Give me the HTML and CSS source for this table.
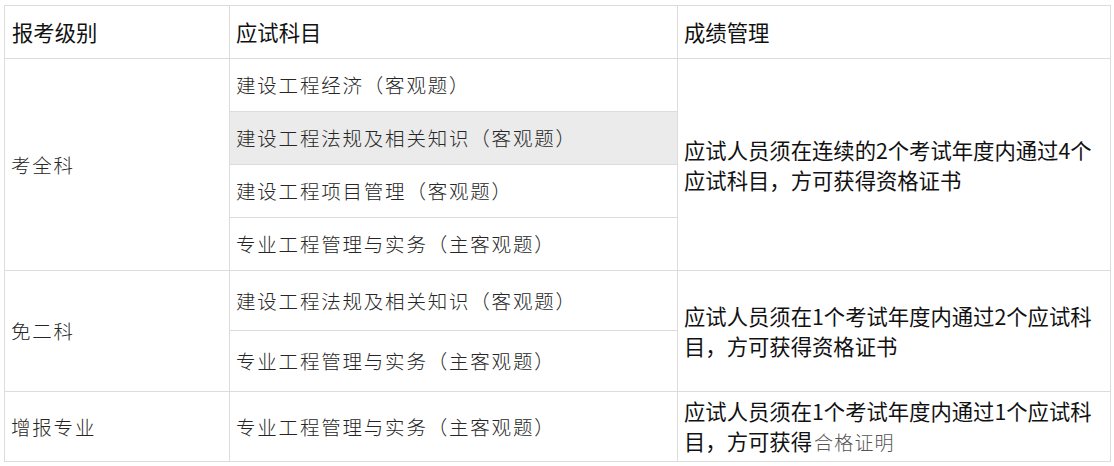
FILE: index.html
```html
<!DOCTYPE html>
<html lang="zh-CN">
<head>
<meta charset="utf-8">
<title>报考级别</title>
<link rel="stylesheet" href="styles.css">
</head>
<body>
<table class="exam">
  <colgroup>
    <col class="c1">
    <col class="c2">
    <col class="c3">
  </colgroup>
  <thead>
    <tr class="head">
      <th>报考级别</th>
      <th>应试科目</th>
      <th>成绩管理</th>
    </tr>
  </thead>
  <tbody>
    <tr class="r53">
      <td class="level" rowspan="4">考全科</td>
      <td class="subj">建设工程经济（客观题）</td>
      <td class="rule" rowspan="4">应试人员须在连续的2个考试年度内通过4个应试科目，方可获得资格证书</td>
    </tr>
    <tr class="r53">
      <td class="subj shade">建设工程法规及相关知识（客观题）</td>
    </tr>
    <tr class="r53">
      <td class="subj">建设工程项目管理（客观题）</td>
    </tr>
    <tr class="r53">
      <td class="subj">专业工程管理与实务（主客观题）</td>
    </tr>
    <tr class="r60">
      <td class="level" rowspan="2">免二科</td>
      <td class="subj">建设工程法规及相关知识（客观题）</td>
      <td class="rule" rowspan="2">应试人员须在1个考试年度内通过2个应试科目，方可获得资格证书</td>
    </tr>
    <tr class="r61">
      <td class="subj">专业工程管理与实务（主客观题）</td>
    </tr>
    <tr class="r70">
      <td class="level">增报专业</td>
      <td class="subj">专业工程管理与实务（主客观题）</td>
      <td class="rule">应试人员须在1个考试年度内通过1个应试科目，方可获得<span class="soft">合格证明</span></td>
    </tr>
  </tbody>
</table>
</body>
</html>
```

FILE: styles.css
```css
html, body {
  margin: 0;
  padding: 0;
  background: #ffffff;
}

body {
  padding: 5px 4px 0 4px;
}

.exam {
  width: 1106px;
  table-layout: fixed;
  border-collapse: collapse;
  font-family: "Noto Sans CJK SC", "Noto Sans", sans-serif;
}

.c1 { width: 225px; }
.c2 { width: 448px; }
.c3 { width: 433px; }

.exam th,
.exam td {
  border: 1px solid #dcdcdc;
  padding: 0 6px;
  vertical-align: middle;
  text-align: left;
}

.exam th {
  font-size: 21.33px;
  font-weight: 400;
  line-height: 30px;
  color: #111111;
  height: 52px;
}

.exam th:first-child,
.level {
  padding-left: 7px;
}

.r53 { height: 53px; }
.r60 { height: 60px; }
.r61 { height: 61px; }
.r70 { height: 70px; }

.level,
.subj {
  font-size: 19.5px;
  font-weight: 300;
  letter-spacing: 1.8px;
  color: #262626;
  line-height: 28px;
}

.subj {
  padding-left: 6px;
}

.shade {
  background: #ebebeb;
}

.rule {
  font-size: 21.33px;
  line-height: 30px;
  color: #111111;
  padding: 4px 6px 4px 5px;
}

.soft {
  display: inline-block;
  margin-left: 2px;
  font-size: 19px;
  line-height: 30px;
  font-weight: 300;
  letter-spacing: 1.2px;
  color: #555555;
}
```
